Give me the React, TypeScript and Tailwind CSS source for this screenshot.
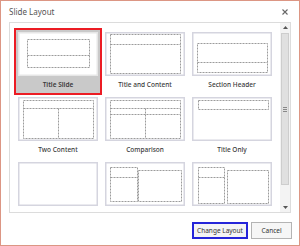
import React from "react";

type Box = { x: number; y: number; w: number; h: number };
type Layout = {
  name: string;
  boxes: Box[];
  lines: [number, number, number, number][];
};

const layouts: Layout[] = [
  {
    name: "Title Slide",
    boxes: [{ x: 9, y: 7, w: 62, h: 28 }],
    lines: [[9, 23, 71, 23]],
  },
  {
    name: "Title and Content",
    boxes: [{ x: 5, y: 2, w: 70, h: 39 }],
    lines: [[5, 12, 75, 12]],
  },
  {
    name: "Section Header",
    boxes: [{ x: 5, y: 11, w: 70, h: 29 }],
    lines: [[5, 30, 75, 30]],
  },
  {
    name: "Two Content",
    boxes: [{ x: 5, y: 3, w: 70, h: 38 }],
    lines: [
      [5, 11, 75, 11],
      [40, 11, 40, 41],
    ],
  },
  {
    name: "Comparison",
    boxes: [{ x: 5, y: 3, w: 70, h: 38 }],
    lines: [
      [5, 11, 75, 11],
      [5, 17, 75, 17],
      [40, 11, 40, 41],
    ],
  },
  {
    name: "Title Only",
    boxes: [{ x: 6, y: 3, w: 70, h: 9 }],
    lines: [],
  },
  { name: "Blank", boxes: [], lines: [] },
  {
    name: "Content with Caption",
    boxes: [
      { x: 5, y: 5, w: 27, h: 34 },
      { x: 33, y: 8, w: 43, h: 31 },
    ],
    lines: [[5, 15, 32, 15]],
  },
  {
    name: "Picture with Caption",
    boxes: [
      { x: 6, y: 5, w: 26, h: 36 },
      { x: 35, y: 8, w: 41, h: 33 },
    ],
    lines: [[6, 15, 32, 15]],
  },
];

const dash = "#9b9b9b";

function Thumb({ layout, selected }: { layout: Layout; selected: boolean }) {
  return (
    <svg width="80" height="44" viewBox="0 0 80 44" className="block">
      <rect
        x="0.75"
        y="0.75"
        width="78.5"
        height="42.5"
        fill="#ffffff"
        stroke={selected ? "#e6e6e6" : "#d5d5df"}
        strokeWidth="1.5"
      />
      {layout.boxes.map((b, i) => (
        <rect
          key={i}
          x={b.x + 0.5}
          y={b.y + 0.5}
          width={b.w}
          height={b.h}
          fill="none"
          stroke={dash}
          strokeWidth="1"
          strokeDasharray="2 1"
        />
      ))}
      {layout.lines.map(([x1, y1, x2, y2], i) => (
        <line
          key={i}
          x1={x1 + 0.5}
          y1={y1 + 0.5}
          x2={x2 + 0.5}
          y2={y2 + 0.5}
          stroke={dash}
          strokeWidth="1"
          strokeDasharray="2 1"
        />
      ))}
    </svg>
  );
}

export default function App() {
  return (
    <div className="w-[300px] h-[246px] border border-[#dc9684] bg-white flex flex-col font-['Noto_Sans',sans-serif] text-[#444]">
      {/* title bar */}
      <div className="h-[21px] flex items-center justify-between pl-[8px] pr-[11px]">
        <span className="text-[8px] leading-none text-[#555]">Slide Layout</span>
        <svg width="6" height="6" viewBox="0 0 6 6">
          <path d="M0.5 0.5L5.5 5.5M5.5 0.5L0.5 5.5" stroke="#666" strokeWidth="1.1" />
        </svg>
      </div>

      {/* layout list */}
      <div className="ml-[8px] w-[282px] h-[191px] border border-[#dcdcdc] flex">
        <div className="flex-1 h-[189px] overflow-hidden pl-[4px] pt-[5px]">
          <div className="grid grid-cols-[87px_87px_87px]">
            {layouts.map((l, i) => {
              const selected = i === 0;
              return (
                <div
                  key={l.name}
                  className={
                    selected
                      ? "h-[67px] -mb-[2px] w-[88px] border-2 border-[#ec1c24] bg-[#c9c9c9] pt-[2px] pl-[2px] flex flex-col"
                      : "h-[65px] pt-[4px] pl-[4px] flex flex-col"
                  }
                >
                  <Thumb layout={l} selected={selected} />
                  {i < 6 && (
                    <div
                      className={
                        "w-[80px] h-[17px] flex items-center justify-center text-[6.5px] whitespace-nowrap text-[#3a3a3a] " +
                        (selected ? "font-semibold" : "font-medium")
                      }
                    >
                      {l.name}
                    </div>
                  )}
                </div>
              );
            })}
          </div>
        </div>

        {/* scrollbar */}
        <div className="w-[10px] bg-[#f3f3f3] flex flex-col items-center">
          <div className="h-[9px] flex items-center justify-center">
            <svg width="5" height="3" viewBox="0 0 5 3">
              <path d="M0 3L2.5 0L5 3Z" fill="#555" />
            </svg>
          </div>
          <div className="mt-[1px] w-[8px] h-[152px] bg-[#e0e0e0] border border-[#cdcdcd] flex items-center justify-center">
            <div className="flex flex-col gap-[1px]">
              <div className="w-[4px] h-px bg-[#888]" />
              <div className="w-[4px] h-px bg-[#888]" />
              <div className="w-[4px] h-px bg-[#888]" />
            </div>
          </div>
          <div className="flex-1" />
          <div className="h-[9px] flex items-center justify-center">
            <svg width="5" height="3" viewBox="0 0 5 3">
              <path d="M0 0L2.5 3L5 0Z" fill="#555" />
            </svg>
          </div>
        </div>
      </div>

      {/* buttons */}
      <div className="flex justify-end gap-[3px] pr-[7px] pt-[9px]">
        <button className="w-[56px] h-[17px] border-2 border-[#2525d9] bg-[#f4f4f4] text-[6.5px] text-[#333] flex items-center justify-center">
          Change Layout
        </button>
        <button className="w-[41px] h-[17px] border border-[#b4b4b4] bg-[#f6f6f6] text-[6.5px] text-[#333] flex items-center justify-center">
          Cancel
        </button>
      </div>
    </div>
  );
}
